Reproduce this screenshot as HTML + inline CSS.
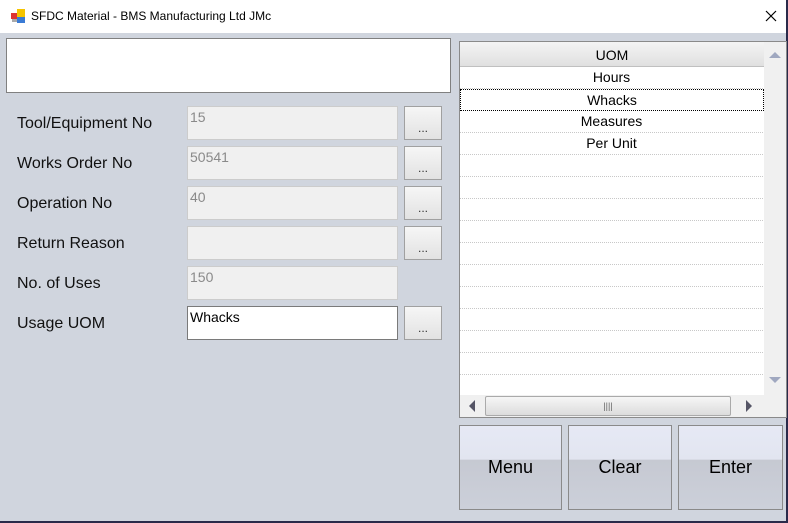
<!DOCTYPE html>
<html><head><style>
*{margin:0;padding:0;box-sizing:border-box}
body{width:788px;height:523px;overflow:hidden;background:#2a2a4a;font-family:"Liberation Sans",sans-serif;position:relative}
.win{position:absolute;left:0;top:0;width:786px;height:521px;background:#d0d5de}
.title{position:absolute;left:0;top:0;width:786px;height:33px;background:#fff;font-size:12px;color:#000}
.title span{position:absolute;left:31px;top:9px}
.abs{position:absolute}
.lbl{position:absolute;left:17px;font-size:16px;color:#111}
.tb{position:absolute;left:187px;width:211px;height:34px;background:#f0f0f0;border:1px solid #ccc;color:#8a8a8a;font-size:14px;padding:2px 0 0 2px}
.btn{position:absolute;left:404px;width:38px;height:34px;border:1px solid #a0a0a0;background:linear-gradient(#f6f6f6,#e2e2e2);font-size:12px;text-align:center;line-height:42px;color:#333}
.row{position:absolute;left:0;width:303px;height:22px;border-bottom:1px dotted #c8c8c8;text-align:center;font-size:14px;line-height:21px;color:#000}
.bb{position:absolute;top:425px;height:85px;border:1px solid #8a8a8a;background:linear-gradient(#e6e9f5 0%,#e2e5f0 40%,#c6c9d2 41%,#ccd0da 100%);font-size:18px;text-align:center;line-height:83px;color:#000}
</style></head><body>
<div class="win">
<div class="title">
<svg class="abs" style="left:11px;top:9px" width="14" height="14"><rect x="0" y="4" width="6" height="6" fill="#d33"/><rect x="6" y="0" width="8" height="8" fill="#f5c400"/><rect x="6" y="8" width="8" height="6" fill="#3a7bd5"/><rect x="1" y="10" width="5" height="3" fill="#aaa"/></svg>
<span>SFDC Material - BMS Manufacturing Ltd JMc</span>
<svg class="abs" style="left:765px;top:10px" width="12" height="12"><path d="M1 1L11 11M11 1L1 11" stroke="#000" stroke-width="1.2"/></svg>
</div>
<div class="abs" style="left:6px;top:38px;width:445px;height:55px;background:#fff;border:1px solid #808080"></div>

<div class="lbl" style="top:115px">Tool/Equipment No</div>
<div class="tb" style="top:106px">15</div><div class="btn" style="top:106px">...</div>
<div class="lbl" style="top:155px">Works Order No</div>
<div class="tb" style="top:146px">50541</div><div class="btn" style="top:146px">...</div>
<div class="lbl" style="top:195px">Operation No</div>
<div class="tb" style="top:186px">40</div><div class="btn" style="top:186px">...</div>
<div class="lbl" style="top:235px">Return Reason</div>
<div class="tb" style="top:226px"></div><div class="btn" style="top:226px">...</div>
<div class="lbl" style="top:275px">No. of Uses</div>
<div class="tb" style="top:266px">150</div>
<div class="lbl" style="top:315px">Usage UOM</div>
<div class="tb" style="top:306px;background:#fff;border-color:#7a7a7a;color:#000">Whacks</div><div class="btn" style="top:306px">...</div>

<div class="abs" style="left:459px;top:41px;width:328px;height:377px;background:#fff;border:1px solid #8a8a8a">
<div class="abs" style="left:0;top:0;width:304px;height:25px;background:linear-gradient(#f4f4f4,#e0e0e0);border-bottom:1px solid #c0c0c0;text-align:center;font-size:14px;line-height:26px">UOM</div>
<div class="row" style="top:25px">Hours</div>
<div class="row" style="top:47px;border:1px dotted #000;width:304px">Whacks</div>
<div class="row" style="top:69px">Measures</div>
<div class="row" style="top:91px">Per Unit</div>
<div class="row" style="top:113px"></div><div class="row" style="top:135px"></div><div class="row" style="top:157px"></div><div class="row" style="top:179px"></div><div class="row" style="top:201px"></div><div class="row" style="top:223px"></div><div class="row" style="top:245px"></div><div class="row" style="top:267px"></div><div class="row" style="top:289px"></div><div class="row" style="top:311px"></div>
<div class="abs" style="left:304px;top:0;width:22px;height:353px;background:#f0f0f0"></div>
<svg class="abs" style="left:308px;top:8px" width="14" height="10"><path d="M1 8L7 2L13 8Z" fill="#a0a8c0"/></svg>
<svg class="abs" style="left:308px;top:333px" width="14" height="10"><path d="M1 2L7 8L13 2Z" fill="#a0a8c0"/></svg>
<div class="abs" style="left:0;top:353px;width:326px;height:22px;background:#f0f0f0"></div>
<svg class="abs" style="left:7px;top:357px" width="10" height="14"><path d="M8 1L2 7L8 13Z" fill="#556"/></svg>
<svg class="abs" style="left:284px;top:357px" width="10" height="14"><path d="M2 1L8 7L2 13Z" fill="#556"/></svg>
<div class="abs" style="left:25px;top:354px;width:246px;height:20px;border:1px solid #aaa;border-radius:2px;background:linear-gradient(#f6f6f6,#dcdcdc);text-align:center;font-size:9px;line-height:18px;color:#666">||||</div>
</div>

<div class="bb" style="left:459px;width:103px">Menu</div>
<div class="bb" style="left:568px;width:104px">Clear</div>
<div class="bb" style="left:678px;width:105px">Enter</div>
</div>
</body></html>
